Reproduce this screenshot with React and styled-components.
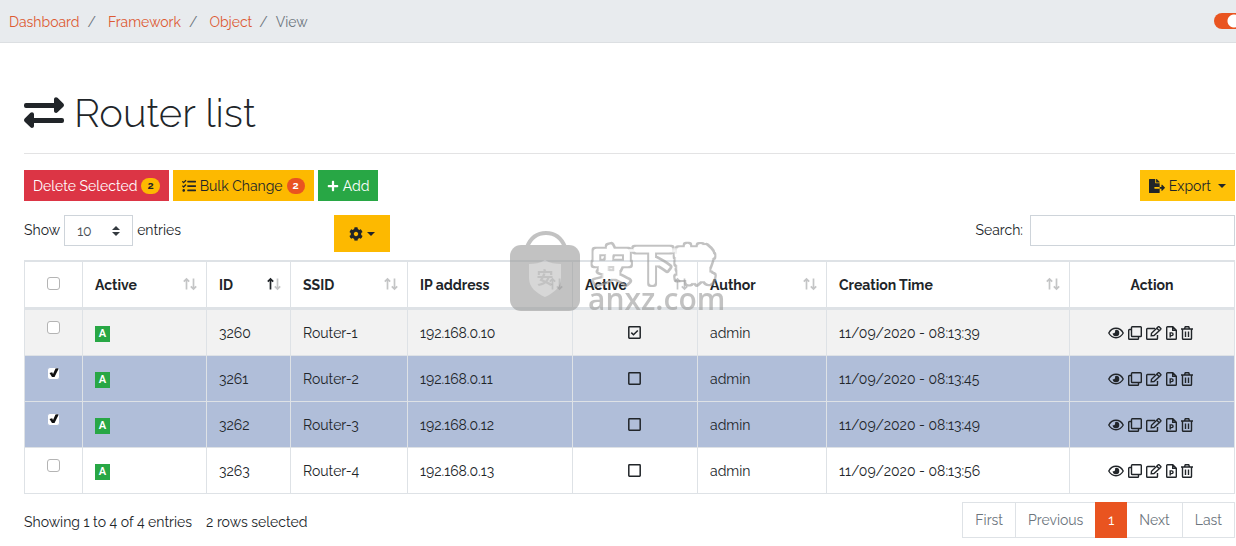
import React, { useState } from "react";
import styled, { createGlobalStyle } from "styled-components";
import { FaCog, FaFileExport, FaPlus, FaTasks } from "react-icons/fa";

const columns = [
  { label: "Active", width: 124, sort: "none" },
  { label: "ID", width: 84, sort: "asc" },
  { label: "SSID", width: 117, sort: "none" },
  { label: "IP address", width: 165, sort: "none" },
  { label: "Active", width: 125, sort: "none" },
  { label: "Author", width: 129, sort: "none" },
  { label: "Creation Time", width: 243, sort: "none" },
];

const routers = [
  { id: 3260, ssid: "Router-1", ip: "192.168.0.10", active: true, time: "11/09/2020 - 08:13:39" },
  { id: 3261, ssid: "Router-2", ip: "192.168.0.11", active: false, time: "11/09/2020 - 08:13:45" },
  { id: 3262, ssid: "Router-3", ip: "192.168.0.12", active: false, time: "11/09/2020 - 08:13:49" },
  { id: 3263, ssid: "Router-4", ip: "192.168.0.13", active: false, time: "11/09/2020 - 08:13:56" },
];

function ExchangeIcon() {
  return (
    <svg width="40" height="32" viewBox="0 0 40 32" fill="currentColor" aria-hidden="true">
      <path d="M2 6h28V2.200c0-1.900 2.200-2.700 3.500-1.400l5.800 5.800c.9.900.9 2.200 0 3.100l-5.800 5.600c-1.300 1.300-3.500.4-3.500-1.400V11H2a2 2 0 0 1-2-2V8a2 2 0 0 1 2-2z" />
      <path d="M38 21H10v-3.800c0-1.900-2.200-2.700-3.500-1.400L.7 21.600c-.9.900-.9 2.200 0 3.100l5.800 5.600c1.300 1.300 3.500.4 3.500-1.400V26h28a2 2 0 0 0 2-2v-1a2 2 0 0 0-2-2z" />
    </svg>
  );
}

function SortIcon({ direction }) {
  return (
    <svg width="14" height="14" viewBox="0 0 14 14" fill="none" strokeWidth="1.700" aria-hidden="true">
      <path d="M3.500 12.500V2M.8 4.700L3.500 2l2.700 2.700" stroke={direction === "asc" ? "#212529" : "#c4c5c6"} />
      <path d="M10.500 1.500V12M7.800 9.300l2.700 2.700 2.700-2.700" stroke="#c4c5c6" />
    </svg>
  );
}

function FlagIcon({ on }) {
  return (
    <svg width="13" height="13" viewBox="0 0 13 13" fill="none" stroke="#212529" strokeWidth="1.500" role="img" aria-label={on ? "Yes" : "No"}>
      <rect x=".8" y=".8" width="11.400" height="11.400" rx=".6" />
      {on && <path d="M3.300 6.600l2.200 2.200 4.300-4.400" />}
    </svg>
  );
}

const stroke = { fill: "none", stroke: "currentColor", strokeWidth: 1.4, "aria-hidden": true };

function EyeIcon() {
  return (
    <svg width="16" height="14" viewBox="0 0 16 14" {...stroke}>
      <path d="M.8 7C2.400 4 5 2.300 8 2.300S13.600 4 15.200 7C13.600 10 11 11.700 8 11.700S2.400 10 .8 7z" />
      <path d="M8 3.700a3.300 3.300 0 1 1-3.300 3.300 1.600 1.600 0 0 0 2.200-2.200A3.300 3.300 0 0 1 8 3.700z" fill="currentColor" stroke="none" />
    </svg>
  );
}

function CloneIcon() {
  return (
    <svg width="14" height="14" viewBox="0 0 14 14" {...stroke}>
      <rect x="3.500" y=".7" width="9.800" height="9.800" rx=".8" />
      <path d="M3.500 3.500H1.500a.8.8 0 0 0-.8.8v8.200c0 .5.300.8.800.8h8.200a.8.8 0 0 0 .8-.8v-2" />
    </svg>
  );
}

function EditIcon() {
  return (
    <svg width="16" height="14" viewBox="0 0 16 14" {...stroke}>
      <path d="M9 2.500H1.500a.8.8 0 0 0-.8.8v9.200c0 .5.300.8.800.8h9.200a.8.8 0 0 0 .8-.8V9" />
      <path d="M5.200 9.800l.3-2.500L12 .9c.4-.4.900-.4 1.300 0l1.300 1.300c.4.400.4.900 0 1.300L8 9.500zM10.800 2.300l2.500 2.500" />
    </svg>
  );
}

function FileIcon() {
  return (
    <svg width="11" height="14" viewBox="0 0 11 14" {...stroke}>
      <path d="M6.800.7H1.500a.8.8 0 0 0-.8.8v11c0 .5.300.8.800.8h8a.8.8 0 0 0 .8-.8V4.200zM6.700.9v3.400h3.500" />
      <path d="M4.200 11.500V6.900h1.500a1.300 1.300 0 0 1 0 2.700H4.200" />
    </svg>
  );
}

function TrashIcon() {
  return (
    <svg width="12" height="14" viewBox="0 0 12 14" {...stroke}>
      <path d="M0 3h12M3.500 2.800L4.300.8h3.400l.8 2M1.500 3v9.500c0 .5.300.8.800.8h7.400a.8.8 0 0 0 .8-.8V3M4.500 5.500v5.500M7.500 5.500v5.500" />
    </svg>
  );
}

const actions = [
  { label: "View", icon: <EyeIcon /> },
  { label: "Clone", icon: <CloneIcon /> },
  { label: "Edit", icon: <EditIcon /> },
  { label: "PDF", icon: <FileIcon /> },
  { label: "Delete", icon: <TrashIcon /> },
];

function App() {
  const [selected, setSelected] = useState([3261, 3262]);
  const [isOn, setIsOn] = useState(true);

  const toggle = (id) =>
    setSelected(
      selected.includes(id) ? selected.filter((s) => s !== id) : [...selected, id]
    );

  const toggleAll = () =>
    setSelected(selected.length === routers.length ? [] : routers.map((r) => r.id));

  return (
    <>
      <GlobalStyle />
      <TopBar>
        <Breadcrumb aria-label="Breadcrumb">
          <li><a href="#dashboard">Dashboard</a></li>
          <li><a href="#framework">Framework</a></li>
          <li><a href="#object">Object</a></li>
          <li>View</li>
        </Breadcrumb>
        <Switch type="checkbox" aria-label="Toggle" checked={isOn} onChange={() => setIsOn(!isOn)} />
      </TopBar>
      <Main>
        <Title>
          <ExchangeIcon /> Router list
        </Title>
        <Toolbar>
          <Button $bg="#dc3545" $color="#fff">
            Delete Selected <Pill $bg="#fdb900" $color="#212529">{selected.length}</Pill>
          </Button>
          <Button $bg="#fdb900">
            <FaTasks /> Bulk Change <Pill $bg="#e95420" $color="#fff">{selected.length}</Pill>
          </Button>
          <Button $bg="#28a745" $color="#fff">
            <FaPlus size={12} /> Add
          </Button>
          <Button $bg="#ffc107" $end>
            <FaFileExport size={16} /> Export <Caret $gap={3} />
          </Button>
        </Toolbar>
        <Filters>
          <Label>
            Show
            <Select defaultValue="10">
              <option>10</option>
              <option>25</option>
              <option>50</option>
            </Select>
            entries
          </Label>
          <GearButton aria-label="Columns">
            <FaCog /> <Caret />
          </GearButton>
          <Label>
            Search:
            <SearchInput type="search" />
          </Label>
        </Filters>
        <TableArea>
          <Table>
            <colgroup>
              <col width="59" />
              {columns.map((c, i) => (
                <col key={i} width={c.width} />
              ))}
              <col width="165" />
            </colgroup>
            <thead>
              <tr>
                <th>
                  <Check type="checkbox" aria-label="Select all" checked={selected.length === routers.length} onChange={toggleAll} />
                </th>
                {columns.map((c, i) => (
                  <th key={i}>
                    <HeadCell>
                      {c.label}
                      <SortIcon direction={c.sort} />
                    </HeadCell>
                  </th>
                ))}
                <th>Action</th>
              </tr>
            </thead>
            <tbody>
              {routers.map((r) => (
                <Row key={r.id} $selected={selected.includes(r.id)}>
                  <td>
                    <Check type="checkbox" aria-label={`Select ${r.ssid}`} checked={selected.includes(r.id)} onChange={() => toggle(r.id)} />
                  </td>
                  <td><Status>A</Status></td>
                  <td>{r.id}</td>
                  <td>{r.ssid}</td>
                  <td>{r.ip}</td>
                  <FlagCell><FlagIcon on={r.active} /></FlagCell>
                  <td>admin</td>
                  <td>{r.time}</td>
                  <td>
                    <Actions>
                      {actions.map((a) => (
                        <a key={a.label} href={`#${a.label.toLowerCase()}-${r.id}`} aria-label={a.label}>
                          {a.icon}
                        </a>
                      ))}
                    </Actions>
                  </td>
                </Row>
              ))}
            </tbody>
          </Table>
          <Watermark>
            <svg width="70" height="80" viewBox="0 0 70 80" aria-hidden="true">
              <path d="M17 16C21 6 28 2 36 2s15 4 19 14" fill="none" stroke="#9b9b9b" strokeWidth="4" />
              <rect y="14" width="70" height="66" rx="11" fill="#9b9b9b" />
              <path d="M35 29c5 3 10 4 16 4v14c0 9-7 15-16 19-9-4-16-10-16-19V33c6 0 11-1 16-4z" fill="#bdbdbd" />
              <text x="35" y="53" textAnchor="middle" fontSize="17" fontWeight="700" fill="#9b9b9b">安</text>
            </svg>
            <div>
              <MarkName viewBox="0 0 142 50">
                {/* hollow letters: the thickened text minus a slightly smaller copy */}
                <filter id="hollow" x="-5%" y="-10%" width="110%" height="120%">
                  <feMorphology in="SourceGraphic" operator="erode" radius="2" result="inner" />
                  <feComposite in="SourceGraphic" in2="inner" operator="out" />
                </filter>
                <text x="4" y="40" filter="url(#hollow)">安下载</text>
              </MarkName>
              <MarkSite>anxz.com</MarkSite>
            </div>
          </Watermark>
        </TableArea>
        <Footer>
          <Info>
            <span>Showing 1 to 4 of 4 entries</span>
            <span>{selected.length} rows selected</span>
          </Info>
          <Pagination>
            <PageButton>First</PageButton>
            <PageButton>Previous</PageButton>
            <PageButton $current>1</PageButton>
            <PageButton>Next</PageButton>
            <PageButton>Last</PageButton>
          </Pagination>
        </Footer>
      </Main>
    </>
  );
}

const GlobalStyle = createGlobalStyle`
  * {
    box-sizing: border-box;
  }
  body {
    margin: 0;
    overflow-x: hidden;
    background: #fff;
    color: #212529;
    font-family: Raleway, Lato, "Noto Sans CJK SC", sans-serif;
    font-size: 14px;
    line-height: 21px;
  }
  button, input, select {
    font: inherit;
    color: inherit;
  }
`;

const TopBar = styled.header`
  display: flex;
  align-items: center;
  justify-content: space-between;
  height: 43px;
  padding-left: 9px;
  background: #e8ebee;
  border-bottom: 1px solid #dcdfe2;
  overflow: hidden;
`;

const Breadcrumb = styled.ol`
  display: flex;
  margin: 0;
  padding: 2px 0 0;
  list-style: none;
  color: #6c757d;

  li + li::before {
    content: "/";
    padding: 0 12px 0 8px;
  }
  li:last-child::before {
    padding: 0 8px 0 7px;
  }
  a {
    color: #dd5a33;
    text-decoration: none;
  }
`;

const Switch = styled.input`
  appearance: none;
  flex: none;
  width: 32px;
  height: 16px;
  margin: 0 -10px 0 0;
  border-radius: 8px;
  background: radial-gradient(circle at 20px 8px, #fff 6px, transparent 7px) #e95420;
`;

const Main = styled.main`
  padding: 46px 1px 8px 24px;
`;

const Title = styled.h1`
  display: flex;
  align-items: center;
  gap: 10px;
  margin: 0 0 16px;
  padding-bottom: 16px;
  border-bottom: 1px solid #e3e3e4;
  font-size: 40px;
  line-height: 48px;
  font-weight: 300;
`;

const Toolbar = styled.div`
  display: flex;
  gap: 4px;
  margin-bottom: 14px;
`;

const Button = styled.button`
  display: inline-flex;
  align-items: center;
  gap: 4px;
  height: 31px;
  padding: 1px 9px 0;
  border: 0;
  background: ${(p) => p.$bg};
  color: ${(p) => p.$color || "#212529"};
  margin-left: ${(p) => (p.$end ? "auto" : 0)};
  cursor: pointer;
`;

const Pill = styled.span`
  padding: 0 6px;
  border-radius: 8px;
  background: ${(p) => p.$bg};
  color: ${(p) => p.$color};
  font-size: 11px;
  line-height: 16px;
  font-weight: 700;
`;

const Caret = styled.span`
  margin-left: ${(p) => p.$gap || 0}px;
  border: 4px solid transparent;
  border-top-color: currentColor;
  border-bottom: 0;
`;

const Filters = styled.div`
  display: grid;
  grid-template-columns: 310px 1fr auto;
  justify-items: start;
  align-items: start;
  margin-bottom: 8px;
`;

const Label = styled.label`
  display: flex;
  align-items: center;
  gap: 4px;
`;

const Select = styled.select`
  appearance: none;
  width: 69px;
  height: 31px;
  padding: 1px 12px 0;
  border: 1px solid #ced4da;
  border-radius: 0;
  color: #495057;
  background: #fff
    url("data:image/svg+xml,%3csvg xmlns='http://www.w3.org/2000/svg' viewBox='0 0 4 5'%3e%3cpath fill='%23343a40' d='M2 0L0 2h4zm0 5L0 3h4z'/%3e%3c/svg%3e")
    no-repeat right 12px center / 8px 10px;
`;

const GearButton = styled(Button)`
  height: 37px;
  padding: 0 15px;
  background: #fdb900;
`;

const SearchInput = styled.input`
  width: 205px;
  height: 31px;
  margin-left: 3px;
  border: 1px solid #ced4da;
`;

const TableArea = styled.div`
  position: relative;
`;

const Table = styled.table`
  width: 100%;
  table-layout: fixed;
  border-collapse: separate;
  border-spacing: 0;

  th,
  td {
    height: 46px;
    padding: 2px 12px 0;
    border-right: 1px solid #dee2e6;
    border-bottom: 1px solid #dee2e6;
    text-align: left;
  }
  th {
    height: 50px;
    border-top: 2px solid #dee2e6;
    border-bottom-width: 3px;
    font-weight: 700;
  }
  th:first-child,
  td:first-child {
    border-left: 1px solid #dee2e6;
  }
  th:first-child {
    padding: 0 12px 2px;
  }
  td:first-child {
    padding-top: 11px;
    vertical-align: top;
  }
  th:last-child {
    text-align: center;
  }
`;

const HeadCell = styled.div`
  display: flex;
  align-items: center;
  justify-content: space-between;
  margin-right: -3px;

  svg {
    margin-bottom: 3px;
  }
`;

const Row = styled.tr`
  background: ${(p) => (p.$selected ? "#b0bed9" : "#fff")};

  &:first-child {
    background: ${(p) => (p.$selected ? "#b0bed9" : "#f2f2f2")};
  }
`;

const Check = styled.input`
  appearance: none;
  display: block;
  width: 13px;
  height: 13px;
  margin: 0 auto;
  border: 1px solid #b4b4b4;
  border-radius: 3px;
  background: #fff;

  &:checked {
    border-color: #b0bed9;
    background: #fff
      url("data:image/svg+xml,%3csvg xmlns='http://www.w3.org/2000/svg' viewBox='0 0 11 11'%3e%3cpath fill='%23111' d='M1.500 5L4.200 4.200l.8 1.700L7.500.5 11 0 6.500 9H4z'/%3e%3c/svg%3e")
      no-repeat center / 11px;
  }
`;

const Status = styled.span`
  display: block;
  width: 15px;
  background: #28a745;
  color: #fff;
  font-size: 11px;
  line-height: 16px;
  font-weight: 700;
  text-align: center;
`;

const FlagCell = styled.td`
  && {
    padding: 0 14px 0 12px;
  }
  svg {
    display: block;
    margin: 0 auto;
  }
`;

const Actions = styled.div`
  display: flex;
  justify-content: center;
  gap: 4px;
  padding: 0 4px 2px 0;

  a {
    display: flex;
    color: #212529;
  }
`;

const Watermark = styled.div`
  position: absolute;
  top: -29px;
  left: 486px;
  display: flex;
  gap: 3px;
  opacity: 0.6;
  pointer-events: none;
`;

const MarkName = styled.svg`
  display: block;
  width: 142px;
  height: 47px;
  margin-top: 11px;
  overflow: visible;
  fill: #9b9b9b;
  stroke: #9b9b9b;
  stroke-width: 7px;
  stroke-linejoin: round;
  font-family: "Noto Sans CJK SC", sans-serif;
  font-size: 44px;
`;

const MarkSite = styled.div`
  padding-left: 5px;
  color: #9b9b9b;
  font-family: "Open Sans", sans-serif;
  font-size: 30px;
  line-height: 20px;
  font-weight: 600;
`;

const Footer = styled.footer`
  display: flex;
  align-items: center;
  justify-content: space-between;
  margin-top: 8px;
`;

const Info = styled.div`
  display: flex;
  gap: 14px;
  padding-top: 4px;
`;

const Pagination = styled.nav`
  display: flex;
`;

const PageButton = styled.button`
  height: 36px;
  padding: 0 12px;
  margin-left: -1px;
  border: 1px solid ${(p) => (p.$current ? "#e95420" : "#dee2e6")};
  background: ${(p) => (p.$current ? "#e95420" : "#fff")};
  color: ${(p) => (p.$current ? "#fff" : "#6c757d")};
  z-index: ${(p) => (p.$current ? 1 : "auto")};
`;

export default App;
